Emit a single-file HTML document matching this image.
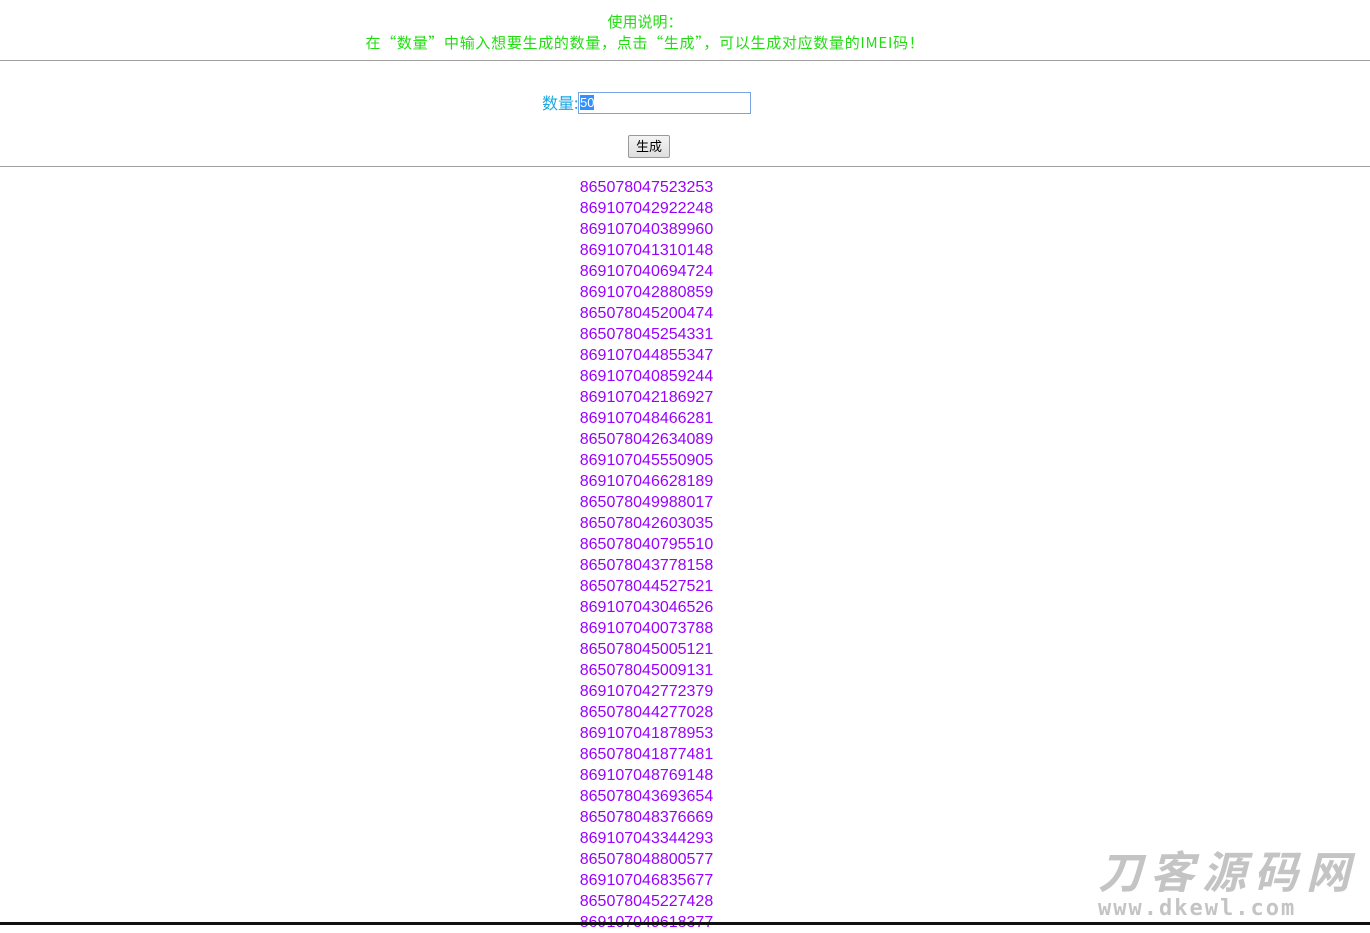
<!DOCTYPE html>
<html><head><meta charset="utf-8"><style>
body{margin:0;width:1370px;height:925px;overflow:hidden;background:#fff;font-family:"Liberation Sans","Noto Sans CJK SC",sans-serif;position:relative}
.top{position:absolute;top:11px;left:0;width:1290px;text-align:center;color:#22dd11;font-size:15px;line-height:21px;font-family:"Noto Sans CJK SC",sans-serif}
.top .l2{letter-spacing:0.7px}
hr{position:absolute;left:0;width:1370px;margin:0;border:0;border-top:1px solid #a0a0a0}
.lab{position:absolute;top:90px;left:542px;color:#1ba7e0;font-size:16px;font-family:"Noto Sans CJK SC",sans-serif}
.inp{position:absolute;top:92px;left:578px;width:171px;height:20px;border:1px solid #7aa3e6;box-sizing:content-box}
.inp span{background:#3390ff;color:#fff;font-size:13px;margin-left:1px;line-height:20px}
.btn{position:absolute;top:135px;left:628px;width:40px;height:21px;border:1px solid #999;background:linear-gradient(#f4f4f4,#dedede);font-size:13px;text-align:center;line-height:21px;border-radius:2px}
.nums{position:absolute;top:177px;left:0;width:1293px;text-align:center;color:#9a00ff;font-size:16px;line-height:21px}
.wm{position:absolute;left:1098px;top:850px;color:#c4c4c4;font-weight:bold;font-style:italic}
</style></head><body>
<div class="top">使用说明：<br><span class="l2">在“数量”中输入想要生成的数量，点击“生成”，可以生成对应数量的IMEI码！</span></div>
<hr style="top:60px">
<div class="lab">数量:</div>
<div class="inp"><span>50</span></div>
<div class="btn">生成</div>
<hr style="top:166px">
<div class="nums">865078047523253<br>869107042922248<br>869107040389960<br>869107041310148<br>869107040694724<br>869107042880859<br>865078045200474<br>865078045254331<br>869107044855347<br>869107040859244<br>869107042186927<br>869107048466281<br>865078042634089<br>869107045550905<br>869107046628189<br>865078049988017<br>865078042603035<br>865078040795510<br>865078043778158<br>865078044527521<br>869107043046526<br>869107040073788<br>865078045005121<br>865078045009131<br>869107042772379<br>865078044277028<br>869107041878953<br>865078041877481<br>869107048769148<br>865078043693654<br>865078048376669<br>869107043344293<br>865078048800577<br>869107046835677<br>865078045227428<br>869107049618377</div>
<div class="wm"><div style="font-size:44px;line-height:48px;letter-spacing:8px">刀客源码网</div><div style="font-size:22px;line-height:22px;font-family:'DejaVu Sans Mono',monospace;letter-spacing:2px;font-style:normal">www.dkewl.com</div></div>
<div style="position:absolute;left:0;top:922px;width:1370px;height:3px;background:#111"></div>
</body></html>
